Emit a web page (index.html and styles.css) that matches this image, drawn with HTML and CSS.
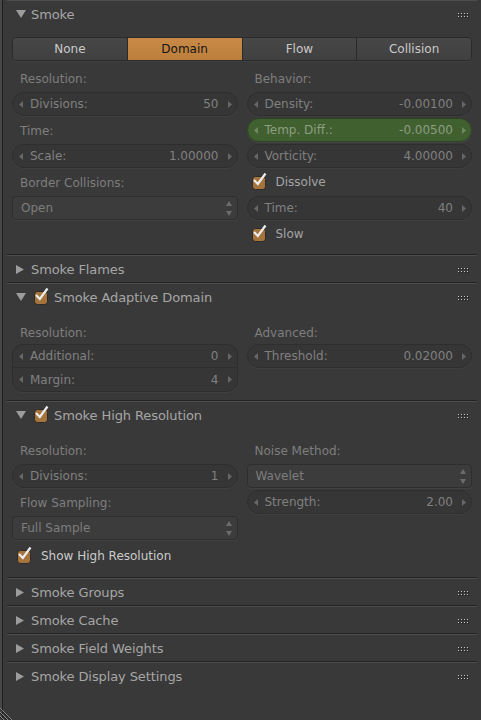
FILE: index.html
```html
<!DOCTYPE html>
<html>
<head>
<meta charset="utf-8">
<link rel="stylesheet" href="styles.css">
</head>
<body>
<div class="frame">
<div class="region">

  <section class="panel">
    <header class="ph">
      <span class="tri"><svg width="10" height="8" viewBox="0 0 10 8"><polygon points="0,0 10,0 5,8" fill="#9c9c9c"/></svg></span>
      <span class="pt">Smoke</span>
      <svg class="grip" width="11" height="5" viewBox="0 0 11 5"><g fill="#1e1e1e"><rect x="1" y="1" width="1" height="1"/><rect x="4" y="1" width="1" height="1"/><rect x="7" y="1" width="1" height="1"/><rect x="10" y="1" width="1" height="1"/><rect x="1" y="4" width="1" height="1"/><rect x="4" y="4" width="1" height="1"/><rect x="7" y="4" width="1" height="1"/><rect x="10" y="4" width="1" height="1"/></g><g fill="#c4c4c4"><rect x="0" y="0" width="1" height="1"/><rect x="3" y="0" width="1" height="1"/><rect x="6" y="0" width="1" height="1"/><rect x="9" y="0" width="1" height="1"/><rect x="0" y="3" width="1" height="1"/><rect x="3" y="3" width="1" height="1"/><rect x="6" y="3" width="1" height="1"/><rect x="9" y="3" width="1" height="1"/></g></svg>
    </header>
    <div class="pb p1">
      <div class="tabs">
        <div class="tab">None</div>
        <div class="tab on">Domain</div>
        <div class="tab">Flow</div>
        <div class="tab">Collision</div>
      </div>
      <div class="cols c1">
        <div class="col">
          <div class="lbl">Resolution:</div>
          <div class="num"><svg class="arr" width="4" height="7" viewBox="0 0 4 7"><polygon points="4,0 0,3.5 4,7"/></svg><span class="k">Divisions:</span><span class="v">50</span><svg class="arr" width="4" height="7" viewBox="0 0 4 7"><polygon points="0,0 4,3.5 0,7"/></svg></div>
          <div class="lbl">Time:</div>
          <div class="num"><svg class="arr" width="4" height="7" viewBox="0 0 4 7"><polygon points="4,0 0,3.5 4,7"/></svg><span class="k">Scale:</span><span class="v">1.00000</span><svg class="arr" width="4" height="7" viewBox="0 0 4 7"><polygon points="0,0 4,3.5 0,7"/></svg></div>
          <div class="lbl">Border Collisions:</div>
          <div class="menu"><span class="k">Open</span><svg class="ud" width="6" height="15" viewBox="0 0 6 15"><polygon points="3,0 6,5 0,5"/><polygon points="0,10 6,10 3,15"/></svg></div>
        </div>
        <div class="col">
          <div class="lbl">Behavior:</div>
          <div class="num"><svg class="arr" width="4" height="7" viewBox="0 0 4 7"><polygon points="4,0 0,3.5 4,7"/></svg><span class="k">Density:</span><span class="v">-0.00100</span><svg class="arr" width="4" height="7" viewBox="0 0 4 7"><polygon points="0,0 4,3.5 0,7"/></svg></div>
          <div class="num green"><svg class="arr" width="4" height="7" viewBox="0 0 4 7"><polygon points="4,0 0,3.5 4,7"/></svg><span class="k">Temp. Diff.:</span><span class="v">-0.00500</span><svg class="arr" width="4" height="7" viewBox="0 0 4 7"><polygon points="0,0 4,3.5 0,7"/></svg></div>
          <div class="num"><svg class="arr" width="4" height="7" viewBox="0 0 4 7"><polygon points="4,0 0,3.5 4,7"/></svg><span class="k">Vorticity:</span><span class="v">4.00000</span><svg class="arr" width="4" height="7" viewBox="0 0 4 7"><polygon points="0,0 4,3.5 0,7"/></svg></div>
          <div class="chk"><svg class="cb" width="16" height="18" viewBox="0 0 16 18"><rect x="1.5" y="4.5" width="13" height="13" rx="3" fill="#a5733c" stroke="#2c2a27"/><path d="M3 8 L6.8 12 L14.5 1.5" fill="none" stroke="#ececec" stroke-width="2.2"/></svg><span>Dissolve</span></div>
          <div class="num"><svg class="arr" width="4" height="7" viewBox="0 0 4 7"><polygon points="4,0 0,3.5 4,7"/></svg><span class="k">Time:</span><span class="v">40</span><svg class="arr" width="4" height="7" viewBox="0 0 4 7"><polygon points="0,0 4,3.5 0,7"/></svg></div>
          <div class="chk"><svg class="cb" width="16" height="18" viewBox="0 0 16 18"><rect x="1.5" y="4.5" width="13" height="13" rx="3" fill="#a5733c" stroke="#2c2a27"/><path d="M3 8 L6.8 12 L14.5 1.5" fill="none" stroke="#ececec" stroke-width="2.2"/></svg><span>Slow</span></div>
        </div>
      </div>
    </div>
  </section>

  <section class="panel">
    <header class="ph">
      <span class="tri"><svg width="8" height="9" viewBox="0 0 8 9"><polygon points="0,0 8,4.5 0,9" fill="#9c9c9c"/></svg></span>
      <span class="pt">Smoke Flames</span>
      <svg class="grip" width="11" height="5" viewBox="0 0 11 5"><g fill="#1e1e1e"><rect x="1" y="1" width="1" height="1"/><rect x="4" y="1" width="1" height="1"/><rect x="7" y="1" width="1" height="1"/><rect x="10" y="1" width="1" height="1"/><rect x="1" y="4" width="1" height="1"/><rect x="4" y="4" width="1" height="1"/><rect x="7" y="4" width="1" height="1"/><rect x="10" y="4" width="1" height="1"/></g><g fill="#c4c4c4"><rect x="0" y="0" width="1" height="1"/><rect x="3" y="0" width="1" height="1"/><rect x="6" y="0" width="1" height="1"/><rect x="9" y="0" width="1" height="1"/><rect x="0" y="3" width="1" height="1"/><rect x="3" y="3" width="1" height="1"/><rect x="6" y="3" width="1" height="1"/><rect x="9" y="3" width="1" height="1"/></g></svg>
    </header>
  </section>

  <section class="panel">
    <header class="ph">
      <span class="tri"><svg width="10" height="8" viewBox="0 0 10 8"><polygon points="0,0 10,0 5,8" fill="#9c9c9c"/></svg></span>
      <svg class="cb hcb" width="16" height="18" viewBox="0 0 16 18"><rect x="1.5" y="4.5" width="13" height="13" rx="3" fill="#a5733c" stroke="#2c2a27"/><path d="M3 8 L6.8 12 L14.5 1.5" fill="none" stroke="#ececec" stroke-width="2.2"/></svg>
      <span class="pt">Smoke Adaptive Domain</span>
      <svg class="grip" width="11" height="5" viewBox="0 0 11 5"><g fill="#1e1e1e"><rect x="1" y="1" width="1" height="1"/><rect x="4" y="1" width="1" height="1"/><rect x="7" y="1" width="1" height="1"/><rect x="10" y="1" width="1" height="1"/><rect x="1" y="4" width="1" height="1"/><rect x="4" y="4" width="1" height="1"/><rect x="7" y="4" width="1" height="1"/><rect x="10" y="4" width="1" height="1"/></g><g fill="#c4c4c4"><rect x="0" y="0" width="1" height="1"/><rect x="3" y="0" width="1" height="1"/><rect x="6" y="0" width="1" height="1"/><rect x="9" y="0" width="1" height="1"/><rect x="0" y="3" width="1" height="1"/><rect x="3" y="3" width="1" height="1"/><rect x="6" y="3" width="1" height="1"/><rect x="9" y="3" width="1" height="1"/></g></svg>
    </header>
    <div class="pb p2">
      <div class="cols">
        <div class="col tight">
          <div class="lbl">Resolution:</div>
          <div class="num top"><svg class="arr" width="4" height="7" viewBox="0 0 4 7"><polygon points="4,0 0,3.5 4,7"/></svg><span class="k">Additional:</span><span class="v">0</span><svg class="arr" width="4" height="7" viewBox="0 0 4 7"><polygon points="0,0 4,3.5 0,7"/></svg></div>
          <div class="num bot"><svg class="arr" width="4" height="7" viewBox="0 0 4 7"><polygon points="4,0 0,3.5 4,7"/></svg><span class="k">Margin:</span><span class="v">4</span><svg class="arr" width="4" height="7" viewBox="0 0 4 7"><polygon points="0,0 4,3.5 0,7"/></svg></div>
        </div>
        <div class="col tight">
          <div class="lbl">Advanced:</div>
          <div class="num"><svg class="arr" width="4" height="7" viewBox="0 0 4 7"><polygon points="4,0 0,3.5 4,7"/></svg><span class="k">Threshold:</span><span class="v">0.02000</span><svg class="arr" width="4" height="7" viewBox="0 0 4 7"><polygon points="0,0 4,3.5 0,7"/></svg></div>
        </div>
      </div>
    </div>
  </section>

  <section class="panel">
    <header class="ph">
      <span class="tri"><svg width="10" height="8" viewBox="0 0 10 8"><polygon points="0,0 10,0 5,8" fill="#9c9c9c"/></svg></span>
      <svg class="cb hcb" width="16" height="18" viewBox="0 0 16 18"><rect x="1.5" y="4.5" width="13" height="13" rx="3" fill="#a5733c" stroke="#2c2a27"/><path d="M3 8 L6.8 12 L14.5 1.5" fill="none" stroke="#ececec" stroke-width="2.2"/></svg>
      <span class="pt">Smoke High Resolution</span>
      <svg class="grip" width="11" height="5" viewBox="0 0 11 5"><g fill="#1e1e1e"><rect x="1" y="1" width="1" height="1"/><rect x="4" y="1" width="1" height="1"/><rect x="7" y="1" width="1" height="1"/><rect x="10" y="1" width="1" height="1"/><rect x="1" y="4" width="1" height="1"/><rect x="4" y="4" width="1" height="1"/><rect x="7" y="4" width="1" height="1"/><rect x="10" y="4" width="1" height="1"/></g><g fill="#c4c4c4"><rect x="0" y="0" width="1" height="1"/><rect x="3" y="0" width="1" height="1"/><rect x="6" y="0" width="1" height="1"/><rect x="9" y="0" width="1" height="1"/><rect x="0" y="3" width="1" height="1"/><rect x="3" y="3" width="1" height="1"/><rect x="6" y="3" width="1" height="1"/><rect x="9" y="3" width="1" height="1"/></g></svg>
    </header>
    <div class="pb p3">
      <div class="cols">
        <div class="col">
          <div class="lbl">Resolution:</div>
          <div class="num"><svg class="arr" width="4" height="7" viewBox="0 0 4 7"><polygon points="4,0 0,3.5 4,7"/></svg><span class="k">Divisions:</span><span class="v">1</span><svg class="arr" width="4" height="7" viewBox="0 0 4 7"><polygon points="0,0 4,3.5 0,7"/></svg></div>
          <div class="lbl">Flow Sampling:</div>
          <div class="menu"><span class="k">Full Sample</span><svg class="ud" width="6" height="15" viewBox="0 0 6 15"><polygon points="3,0 6,5 0,5"/><polygon points="0,10 6,10 3,15"/></svg></div>
          <div class="chk bright"><svg class="cb" width="16" height="18" viewBox="0 0 16 18"><rect x="1.5" y="4.5" width="13" height="13" rx="3" fill="#a5733c" stroke="#2c2a27"/><path d="M3 8 L6.8 12 L14.5 1.5" fill="none" stroke="#ececec" stroke-width="2.2"/></svg><span>Show High Resolution</span></div>
        </div>
        <div class="col">
          <div class="lbl">Noise Method:</div>
          <div class="menu"><span class="k">Wavelet</span><svg class="ud" width="6" height="15" viewBox="0 0 6 15"><polygon points="3,0 6,5 0,5"/><polygon points="0,10 6,10 3,15"/></svg></div>
          <div class="num"><svg class="arr" width="4" height="7" viewBox="0 0 4 7"><polygon points="4,0 0,3.5 4,7"/></svg><span class="k">Strength:</span><span class="v">2.00</span><svg class="arr" width="4" height="7" viewBox="0 0 4 7"><polygon points="0,0 4,3.5 0,7"/></svg></div>
        </div>
      </div>
    </div>
  </section>

  <section class="panel">
    <header class="ph">
      <span class="tri"><svg width="8" height="9" viewBox="0 0 8 9"><polygon points="0,0 8,4.5 0,9" fill="#9c9c9c"/></svg></span>
      <span class="pt">Smoke Groups</span>
      <svg class="grip" width="11" height="5" viewBox="0 0 11 5"><g fill="#1e1e1e"><rect x="1" y="1" width="1" height="1"/><rect x="4" y="1" width="1" height="1"/><rect x="7" y="1" width="1" height="1"/><rect x="10" y="1" width="1" height="1"/><rect x="1" y="4" width="1" height="1"/><rect x="4" y="4" width="1" height="1"/><rect x="7" y="4" width="1" height="1"/><rect x="10" y="4" width="1" height="1"/></g><g fill="#c4c4c4"><rect x="0" y="0" width="1" height="1"/><rect x="3" y="0" width="1" height="1"/><rect x="6" y="0" width="1" height="1"/><rect x="9" y="0" width="1" height="1"/><rect x="0" y="3" width="1" height="1"/><rect x="3" y="3" width="1" height="1"/><rect x="6" y="3" width="1" height="1"/><rect x="9" y="3" width="1" height="1"/></g></svg>
    </header>
  </section>

  <section class="panel">
    <header class="ph">
      <span class="tri"><svg width="8" height="9" viewBox="0 0 8 9"><polygon points="0,0 8,4.5 0,9" fill="#9c9c9c"/></svg></span>
      <span class="pt">Smoke Cache</span>
      <svg class="grip" width="11" height="5" viewBox="0 0 11 5"><g fill="#1e1e1e"><rect x="1" y="1" width="1" height="1"/><rect x="4" y="1" width="1" height="1"/><rect x="7" y="1" width="1" height="1"/><rect x="10" y="1" width="1" height="1"/><rect x="1" y="4" width="1" height="1"/><rect x="4" y="4" width="1" height="1"/><rect x="7" y="4" width="1" height="1"/><rect x="10" y="4" width="1" height="1"/></g><g fill="#c4c4c4"><rect x="0" y="0" width="1" height="1"/><rect x="3" y="0" width="1" height="1"/><rect x="6" y="0" width="1" height="1"/><rect x="9" y="0" width="1" height="1"/><rect x="0" y="3" width="1" height="1"/><rect x="3" y="3" width="1" height="1"/><rect x="6" y="3" width="1" height="1"/><rect x="9" y="3" width="1" height="1"/></g></svg>
    </header>
  </section>

  <section class="panel">
    <header class="ph">
      <span class="tri"><svg width="8" height="9" viewBox="0 0 8 9"><polygon points="0,0 8,4.5 0,9" fill="#9c9c9c"/></svg></span>
      <span class="pt">Smoke Field Weights</span>
      <svg class="grip" width="11" height="5" viewBox="0 0 11 5"><g fill="#1e1e1e"><rect x="1" y="1" width="1" height="1"/><rect x="4" y="1" width="1" height="1"/><rect x="7" y="1" width="1" height="1"/><rect x="10" y="1" width="1" height="1"/><rect x="1" y="4" width="1" height="1"/><rect x="4" y="4" width="1" height="1"/><rect x="7" y="4" width="1" height="1"/><rect x="10" y="4" width="1" height="1"/></g><g fill="#c4c4c4"><rect x="0" y="0" width="1" height="1"/><rect x="3" y="0" width="1" height="1"/><rect x="6" y="0" width="1" height="1"/><rect x="9" y="0" width="1" height="1"/><rect x="0" y="3" width="1" height="1"/><rect x="3" y="3" width="1" height="1"/><rect x="6" y="3" width="1" height="1"/><rect x="9" y="3" width="1" height="1"/></g></svg>
    </header>
  </section>

  <section class="panel last">
    <header class="ph">
      <span class="tri"><svg width="8" height="9" viewBox="0 0 8 9"><polygon points="0,0 8,4.5 0,9" fill="#9c9c9c"/></svg></span>
      <span class="pt">Smoke Display Settings</span>
      <svg class="grip" width="11" height="5" viewBox="0 0 11 5"><g fill="#1e1e1e"><rect x="1" y="1" width="1" height="1"/><rect x="4" y="1" width="1" height="1"/><rect x="7" y="1" width="1" height="1"/><rect x="10" y="1" width="1" height="1"/><rect x="1" y="4" width="1" height="1"/><rect x="4" y="4" width="1" height="1"/><rect x="7" y="4" width="1" height="1"/><rect x="10" y="4" width="1" height="1"/></g><g fill="#c4c4c4"><rect x="0" y="0" width="1" height="1"/><rect x="3" y="0" width="1" height="1"/><rect x="6" y="0" width="1" height="1"/><rect x="9" y="0" width="1" height="1"/><rect x="0" y="3" width="1" height="1"/><rect x="3" y="3" width="1" height="1"/><rect x="6" y="3" width="1" height="1"/><rect x="9" y="3" width="1" height="1"/></g></svg>
    </header>
  </section>

</div>
</div>
<svg class="corner" width="14" height="13" viewBox="0 0 14 13">
  <g stroke-width="1">
    <line x1="0" y1="1" x2="12" y2="13" stroke="#8a8a8a"/>
    <line x1="0" y1="2" x2="11" y2="13" stroke="#1e1e1e"/>
    <line x1="0" y1="5" x2="8" y2="13" stroke="#8a8a8a"/>
    <line x1="0" y1="6" x2="7" y2="13" stroke="#1e1e1e"/>
    <line x1="0" y1="9" x2="4" y2="13" stroke="#8a8a8a"/>
    <line x1="0" y1="10" x2="3" y2="13" stroke="#1e1e1e"/>
  </g>
</svg>
</body>
</html>
```

FILE: styles.css
```css
* { box-sizing: border-box; }

html, body {
  margin: 0;
  padding: 0;
}

body {
  width: 481px;
  height: 720px;
  overflow: hidden;
  position: relative;
  background: #393939;
  font-family: "DejaVu Sans", "Liberation Sans", sans-serif;
  font-size: 12px;
  color: #7f7f7f;
}

.frame {
  height: 720px;
  border-left: 2px solid #474747;
}

.region {
  height: 100%;
  border-left: 1px solid #1f1f1f;
  padding: 0 4px 0 4px;
}

.panel {
  border-top: 1px solid #4d4d4d;
  border-bottom: 1px solid #232323;
}

.panel.last {
  border-bottom: none;
}

.ph {
  height: 26px;
  display: flex;
  align-items: center;
  padding: 0 8px 0 9px;
  font-size: 13px;
  letter-spacing: -0.1px;
  color: #a6a6a6;
}

.tri {
  width: 10px;
  display: flex;
  align-items: center;
  margin-right: 5px;
}

.tri svg { display: block; }

.hcb {
  margin-left: 2px;
  margin-right: 5px;
  margin-top: -3px;
}

.grip {
  margin-left: auto;
  margin-top: 3px;
  display: block;
}

.pb {
  padding: 9px 5px 8px 5px;
}

.pb.p2 { padding: 10px 5px 8px 5px; }
.pb.p3 { padding: 10px 5px 11px 5px; }

.tabs {
  display: flex;
  height: 24px;
  margin-top: 1px;
  margin-bottom: -1px;
  border: 1px solid #2a2a2a;
  border-radius: 4px;
  overflow: hidden;
  box-shadow: 0 1px 0 #404040;
}

.tab {
  flex: 1;
  display: flex;
  align-items: center;
  justify-content: center;
  background: linear-gradient(#474747, #404040);
  color: #c9c9c9;
}

.tab + .tab {
  border-left: 1px solid #2a2a2a;
}

.tab.on {
  background: linear-gradient(#c88a46, #bd7e3c);
  color: #151515;
}

.cols {
  display: grid;
  grid-template-columns: 1fr 1fr;
  column-gap: 9px;
  align-items: start;
}

.cols.c1 {
  margin-top: 6px;
}

.col {
  display: flex;
  flex-direction: column;
  gap: 2px;
}

.col.tight {
  gap: 0;
}

.lbl {
  height: 24px;
  line-height: 24px;
  padding-top: 1px;
  padding-left: 8px;
  color: #7e7e7e;
  white-space: nowrap;
}

.num {
  height: 24px;
  display: flex;
  align-items: center;
  padding: 0 5px 0 6px;
  border: 1px solid #2e2e2e;
  border-radius: 12px;
  background: #363636;
  box-shadow: 0 1px 0 #3f3f3f;
  color: #808080;
  white-space: nowrap;
}

.num .arr {
  display: block;
  fill: #676767;
  flex: none;
}

.num .k {
  flex: 1;
  margin-left: 7px;
}

.num .v {
  margin-right: 9px;
}

.num.top {
  border-radius: 11px 11px 0 0;
  box-shadow: none;
}

.num.bot {
  border-radius: 0 0 11px 11px;
  margin-top: -1px;
  height: 25px;
}

.num.green {
  background: #41602f;
  border-color: #2d4322;
  color: #8c9d82;
  box-shadow: 0 1px 0 #444;
}

.num.green .arr {
  fill: #6f8a60;
}

.menu {
  height: 24px;
  display: flex;
  align-items: center;
  padding: 0 5px 0 8px;
  border: 1px solid #2e2e2e;
  border-radius: 4px;
  background: #3c3c3c;
  box-shadow: 0 1px 0 #414141;
  color: #7d7d7d;
}

.menu .k { flex: 1; }

.menu .ud {
  display: block;
  fill: #6b6b6b;
}

.chk {
  height: 24px;
  display: flex;
  align-items: center;
  gap: 9px;
  padding-left: 4px;
  color: #a4a4a4;
}

.chk .cb {
  display: block;
  margin-top: -3px;
}

.chk.bright {
  color: #cbcbcb;
  margin-top: 2px;
  margin-bottom: -2px;
}

.corner {
  position: absolute;
  left: 0;
  bottom: 0;
  display: block;
}
```
